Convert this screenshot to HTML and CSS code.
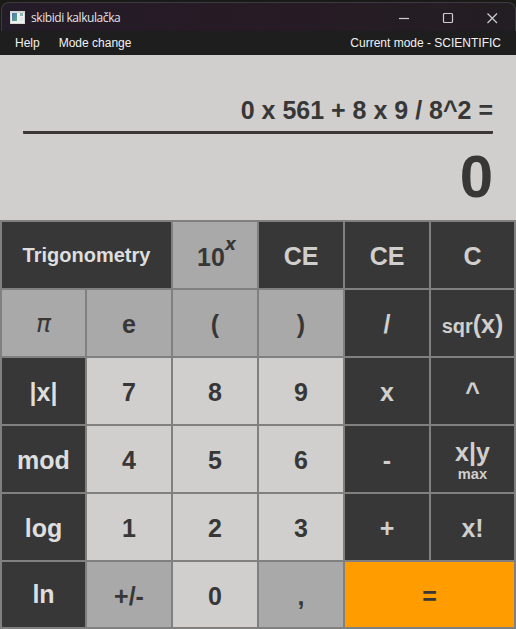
FILE: index.html
```html
<!DOCTYPE html>
<html lang="en">
<head>
<meta charset="utf-8">
<title>skibidi kalkulačka</title>
<link rel="stylesheet" href="styles.css">
</head>
<body>
<div class="window">
  <header class="titlebar">
    <svg class="app-icon" width="15" height="13" viewBox="0 0 15 13">
      <defs><linearGradient id="pane" x1="0" y1="0" x2="1" y2="1"><stop offset="0" stop-color="#4d79b5"/><stop offset="1" stop-color="#5ba884"/></linearGradient></defs>
      <rect width="15" height="13" fill="#d6d6d6"/>
      <rect x="1" y="2" width="13" height="10" fill="#f0f0f0"/>
      <rect x="2" y="2" width="5" height="8" fill="url(#pane)"/>
      <rect x="10" y="2" width="3" height="3" fill="#8fb5ab"/>
      <rect x="10" y="6" width="3" height="4" fill="#e3e3e3"/>
    </svg>
    <span class="title">skibidi kalkulačka</span>
    <svg class="controls" width="100" height="12" viewBox="0 0 100 12" fill="none" stroke="#d0ced0">
      <path d="M0 6.5H10" stroke-width="1.2"/>
      <rect x="44.5" y="1.5" width="9" height="9" rx="1" stroke-width="1.2"/>
      <path d="M88.5 1.5l9.5 9.5M98 1.5l-9.5 9.5" stroke-width="1.2"/>
    </svg>
  </header>
  <nav class="menu">
    <span class="item">Help</span>
    <span class="item">Mode change</span>
    <span class="mode">Current mode - SCIENTIFIC</span>
  </nav>
  <section class="display">
    <div class="expression">0 x 561 + 8 x 9 / 8^2 =</div>
    <div class="result">0</div>
  </section>
  <main class="keys">
    <div class="key fn wide trig">Trigonometry</div>
    <div class="key mid power"><span>10</span><i class="exp">x</i></div>
    <div class="key op">CE</div>
    <div class="key op">CE</div>
    <div class="key op">C</div>

    <div class="key mid"><i class="pi">π</i></div>
    <div class="key mid">e</div>
    <div class="key mid">(</div>
    <div class="key mid">)</div>
    <div class="key op">/</div>
    <div class="key op"><span><span class="sqr">sqr</span>(x)</span></div>

    <div class="key fn">|x|</div>
    <div class="key num">7</div>
    <div class="key num">8</div>
    <div class="key num">9</div>
    <div class="key op">x</div>
    <div class="key op">^</div>

    <div class="key fn">mod</div>
    <div class="key num">4</div>
    <div class="key num">5</div>
    <div class="key num">6</div>
    <div class="key op">-</div>
    <div class="key op stack"><span>x|y</span><span class="max">max</span></div>

    <div class="key fn">log</div>
    <div class="key num">1</div>
    <div class="key num">2</div>
    <div class="key num">3</div>
    <div class="key op">+</div>
    <div class="key op">x!</div>

    <div class="key fn ln">ln</div>
    <div class="key mid">+/-</div>
    <div class="key num">0</div>
    <div class="key mid">,</div>
    <div class="key equals wide">=</div>
  </main>
</div>
</body>
</html>
```
FILE: styles.css
```css
* { box-sizing: border-box; }
body {
  margin: 0;
  background: #1a1a19;
  font-family: "Liberation Sans", Arial, sans-serif;
}
.window {
  width: 516px;
  height: 629px;
  padding-top: 2px;
  display: flex;
  flex-direction: column;
  overflow: hidden;
}
.titlebar {
  height: 29px;
  margin-left: 1px;
  padding: 1px 16px 0 8px;
  display: flex;
  align-items: center;
  border: 1px solid #3d3a3d;
  border-bottom: 0;
  border-radius: 8px 8px 0 0;
  background: linear-gradient(90deg, #241c28, #271b25 50%, #231e23);
}
.title {
  margin-left: 6px;
  color: #e4e2e4;
  font: 12px/16px "Open Sans", sans-serif;
  letter-spacing: -0.43px;
}
.controls { margin-left: auto; }
.menu {
  height: 24px;
  padding: 0 15px;
  display: flex;
  align-items: center;
  gap: 19px;
  background: #1e1e1e;
  color: #f2f2f2;
  font-size: 12px;
}
.mode { margin-left: auto; }
.display {
  height: 165px;
  padding: 40px 23px 0;
  background: #d0cfcd;
  color: #373737;
  font-weight: bold;
  text-align: right;
}
.expression {
  height: 39px;
  border-bottom: 3px solid #3b3735;
  border-radius: 1px;
  font-size: 25px;
  line-height: 31px;
}
.result {
  font-size: 60px;
  line-height: 86px;
}
.keys {
  height: 409px;
  padding: 2px;
  display: grid;
  grid-template-columns: 83px 84px 84px 84px 84px 83px;
  grid-template-rows: repeat(5, 66px) 65px;
  gap: 2px;
  background: #808080;
}
.key {
  padding-top: 2px;
  display: flex;
  align-items: center;
  justify-content: center;
  font-size: 25px;
  line-height: 30px;
  font-weight: bold;
}
.wide { grid-column: span 2; }
.fn { background: #373737; color: #dedede; }
.op { background: #373737; color: #d0cfcd; }
.mid { background: #a9a9a9; color: #373737; }
.num { background: #d0cfcd; color: #373737; }
.equals { background: #ff9d00; color: #373737; }
.trig { padding-top: 0; font-size: 20px; }
.power { padding: 4px 0 0 3px; }
.exp {
  margin-bottom: 27px;
  font: italic bold 17px/20px "DejaVu Sans", sans-serif;
}
.pi { font: italic 25px/30px "DejaVu Sans", sans-serif; }
.sqr { font-size: 20px; line-height: 20px; }
.stack { flex-direction: column; }
.stack span { line-height: 28px; }
.stack .max { font-size: 14.67px; line-height: 17px; }
.ln { padding: 0 0 2px; }
```
